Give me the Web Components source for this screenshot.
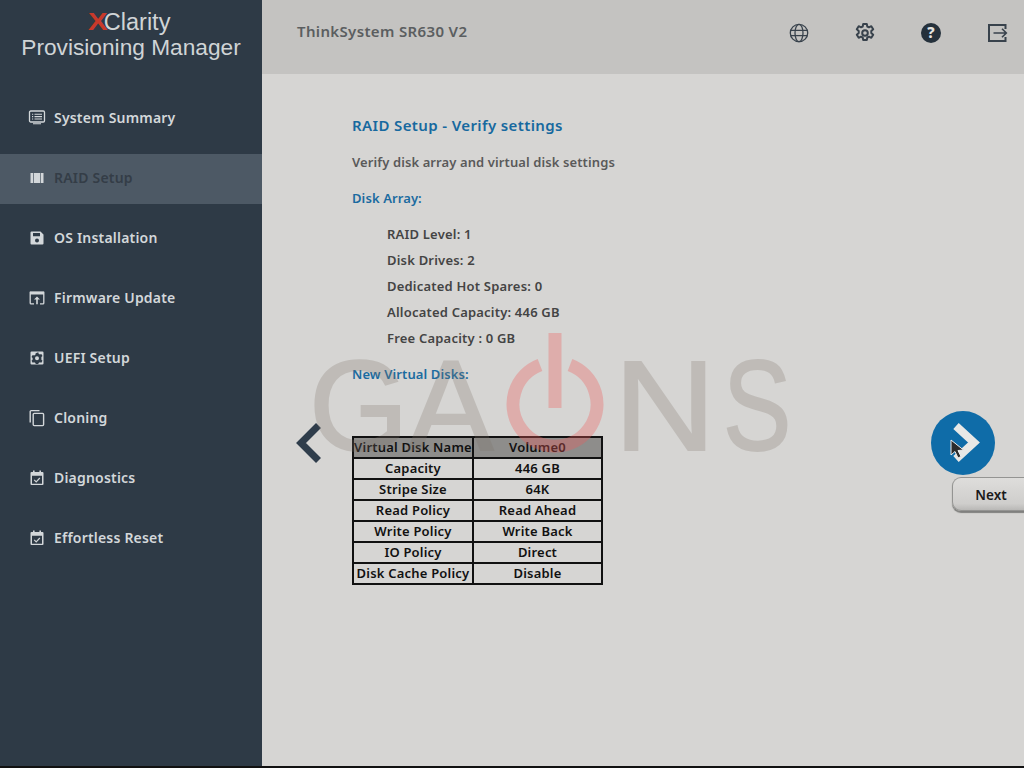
<!DOCTYPE html>
<html lang="en">
<head>
<meta charset="utf-8">
<title>XClarity Provisioning Manager</title>
<style>
  html, body { margin: 0; height: 100%; background: #d6d5d3; overflow: hidden; }
  body { font-family: "Noto Sans", sans-serif; }
</style>
</head>
<body>
<xcc-app>
  <side-bar slot="side">
    <nav-item icon="summary">System Summary</nav-item>
    <nav-item icon="raid" active>RAID Setup</nav-item>
    <nav-item icon="save">OS Installation</nav-item>
    <nav-item icon="update">Firmware Update</nav-item>
    <nav-item icon="chip">UEFI Setup</nav-item>
    <nav-item icon="copy">Cloning</nav-item>
    <nav-item icon="check">Diagnostics</nav-item>
    <nav-item icon="check">Effortless Reset</nav-item>
  </side-bar>
  <top-bar slot="top">ThinkSystem SR630 V2</top-bar>
  <verify-page slot="main"></verify-page>
</xcc-app>

<script>
const ICONS = {
  summary: `<rect x="1.5" y="2" width="15" height="11" rx="1.2" fill="none" stroke="currentColor" stroke-width="1.3"/><path d="M4 5.200h1.200M6.500 5.200H14M4 7.600h1.200M6.500 7.600H14M4 10h1.200M6.500 10H14M5 14.800h8" stroke="currentColor" stroke-width="1.100" fill="none"/>`,
  raid: `<path fill="currentColor" d="M2.500 4h2.800v10H2.500zM6 4h6v10H6zM12.700 4h2.800v10h-2.800z"/>`,
  save: `<path fill="currentColor" fill-rule="evenodd" d="M3.500 2.500h9l3 3v9a1 1 0 0 1-1 1h-11a1 1 0 0 1-1-1v-11a1 1 0 0 1 1-1zM5 4v3.200h7V4zM9 9.600a2 2 0 1 0 0 4 2 2 0 0 0 0-4z"/>`,
  update: `<path fill="none" stroke="currentColor" stroke-width="1.300" d="M6 14.900H3.100a.9.9 0 0 1-.9-.9V3.400h13.600V14a.9.9 0 0 1-.9.9H12"/><path fill="currentColor" d="M2 2.600h14v3H2zM9 7.600l3 3h-2.200v4.600H8.200v-4.600H6z"/>`,
  chip: `<path fill="currentColor" fill-rule="evenodd" d="M3.600 2.500h10.800a1.100 1.100 0 0 1 1.100 1.100v10.800a1.100 1.100 0 0 1-1.100 1.100H3.600a1.100 1.100 0 0 1-1.100-1.100V3.600a1.100 1.100 0 0 1 1.100-1.100zM7.700 4.300l-.3 1.400-1.300.8-1.400-.5-1.200 2.100 1.100 1v1.600l-1.100 1 1.200 2 1.400-.5 1.300.8.300 1h2.600l.3-1 1.300-.8 1.400.5 1.200-2-1.100-1V8.100l1.100-1-1.200-2.100-1.400.5-1.300-.8-.3-1.400zM9 7.200a2 2 0 1 1 0 4 2 2 0 0 1 0-4z"/>`,
  copy: `<path fill="none" stroke="currentColor" stroke-width="1.400" d="M2.200 13.500V2.600a1 1 0 0 1 1-1h8.300"/><rect x="5.200" y="4.400" width="10.400" height="12.200" rx="1" fill="none" stroke="currentColor" stroke-width="1.400"/>`,
  check: `<path fill="currentColor" fill-rule="evenodd" d="M5 1.500h1.600v1.400h4.800V1.500H13v1.400h1.500a1 1 0 0 1 1 1v11.200a1 1 0 0 1-1 1h-11a1 1 0 0 1-1-1V3.900a1 1 0 0 1 1-1H5zM4 6.800v8h10v-8z"/><path fill="none" stroke="currentColor" stroke-width="1.200" d="M6.200 10.800l2 2 3.600-3.800"/>`
};

class XccApp extends HTMLElement {
  constructor() {
    super();
    this.attachShadow({ mode: "open" });
    this.shadowRoot.innerHTML = `
    <style>
      :host {
        display: grid;
        grid-template-columns: 262px 1fr;
        grid-template-rows: 74px 1fr;
        width: 1024px;
        height: 766px;
        position: relative;
      }
      ::slotted([slot="side"]) { grid-row: 1 / 3; }
      .line {
        position: absolute;
        left: 0;
        right: 0;
        top: 766px;
        height: 2px;
        background: #111;
      }
    </style>
    <slot name="side"></slot>
    <slot name="top"></slot>
    <slot name="main"></slot>
    <div class="line"></div>`;
  }
}

class SideBar extends HTMLElement {
  constructor() {
    super();
    this.attachShadow({ mode: "open" });
    this.shadowRoot.innerHTML = `
    <style>
      :host {
        display: flex;
        flex-direction: column;
        background: #2e3a46;
      }
      .logo {
        height: 94px;
        box-sizing: border-box;
        padding-top: 9px;
        text-align: center;
        font-family: "Liberation Sans", sans-serif;
        color: #d0d4d6;
      }
      .brand { font-size: 23.5px; line-height: 26px; margin-left: -2px; }
      .brand b {
        display: inline-block;
        color: #c8392a;
        transform: scaleX(1.25);
        margin: 0 -1.5px 0 0;
      }
      .product { font-size: 22.7px; line-height: 25px; }
      nav { display: flex; flex-direction: column; gap: 10px; }
    </style>
    <div class="logo">
      <div class="brand"><b>X</b>Clarity</div>
      <div class="product">Provisioning Manager</div>
    </div>
    <nav><slot></slot></nav>`;
  }
}

class NavItem extends HTMLElement {
  constructor() {
    super();
    this.attachShadow({ mode: "open" });
  }

  connectedCallback() {
    const icon = ICONS[this.getAttribute("icon")] ?? "";
    this.shadowRoot.innerHTML = `
    <style>
      :host {
        display: flex;
        align-items: center;
        gap: 8px;
        height: 50px;
        padding-left: 28px;
        font-size: 14px;
        font-weight: 600;
        letter-spacing: .2px;
        color: #d3d7da;
      }
      :host([active]) { background: #4d5965; color: #343d47; }
      svg { width: 18px; height: 18px; color: #d3d7da; margin-bottom: 2px; }
      span { margin-bottom: 4px; }
    </style>
    <svg viewBox="0 0 18 18">${icon}</svg>
    <span><slot></slot></span>`;
  }
}

class TopBar extends HTMLElement {
  constructor() {
    super();
    this.attachShadow({ mode: "open" });
    this.shadowRoot.innerHTML = `
    <style>
      :host {
        display: flex;
        align-items: center;
        background: #c4c3c1;
        padding: 0 16px 0 35px;
        font-size: 15px;
        font-weight: 600;
        color: #5b5e60;
      }
      .title { flex: 1; margin-top: -12px; letter-spacing: .35px; }
      .icons { display: flex; gap: 42px; margin-top: -8px; color: #38424c; margin-right: -1px; }
      svg { width: 24px; height: 24px; display: block; }
    </style>
    <div class="title"><slot></slot></div>
    <div class="icons">
      <svg viewBox="0 0 24 24" fill="none" stroke="currentColor" stroke-width="1.300">
        <circle cx="12" cy="12" r="8.700"/><ellipse cx="12" cy="12" rx="4" ry="8.700"/><path d="M3.600 9.300h16.800M3.600 14.700h16.800"/>
      </svg>
      <svg viewBox="0 0 24 24" fill="none" stroke="currentColor" stroke-width="2">
        <path stroke-linejoin="round" d="M10.200 3h3.600l.5 2.500 1.700.8 2.300-1.100 1.900 3-1.900 1.700v2.200l1.900 1.700-1.900 3-2.300-1.100-1.700.8-.5 2.500h-3.600l-.5-2.500-1.700-.8-2.300 1.100-1.900-3 1.900-1.700V9.900L3.800 8.200l1.900-3L8 6.300l1.700-.8z"/><circle cx="12" cy="12" r="2.800"/>
      </svg>
      <svg viewBox="0 0 24 24">
        <circle cx="12" cy="12" r="10" fill="#25313c"/>
        <text x="12" y="17.300" text-anchor="middle" font-family="Noto Sans, sans-serif" font-size="15" font-weight="800" fill="#e4e4e2">?</text>
      </svg>
      <svg viewBox="0 0 24 24" fill="none" stroke="currentColor" stroke-width="2">
        <path d="M20.500 8V4H4v16h16.500v-4"/><path stroke-width="1.600" d="M8.500 12h13M17 7.800l4.300 4.200-4.300 4.200"/>
      </svg>
    </div>`;
  }
}

class VerifyPage extends HTMLElement {
  constructor() {
    super();
    this.attachShadow({ mode: "open" });
    this.shadowRoot.innerHTML = `
    <style>
      :host {
        display: block;
        position: relative;
        background: #d6d5d3;
        padding: 40px 0 0 90px;
        font-size: 13px;
        font-weight: 600;
        color: #444;
      }
      h1, p, h2 { margin: 0; }
      h1 { font-size: 15px; line-height: 22px; font-weight: 600; color: #17699f; letter-spacing: .38px; }
      .sub { margin-top: 16px; line-height: 20px; color: #5a5a5a; letter-spacing: .1px; }
      h2 { font-size: 13px; font-weight: 600; line-height: 20px; color: #1b6ba0; margin-top: 16px; letter-spacing: .1px; }
      ul { list-style: none; margin: 16px 0 13px 35px; padding: 0; display: flex; flex-direction: column; gap: 6px; letter-spacing: .2px; }
      li { line-height: 20px; }
      table {
        margin-top: 52px;
        border-collapse: collapse;
        table-layout: fixed;
        width: 251px;
        color: #111;
        text-align: center;
        font-size: 13px;
        letter-spacing: .2px;
      }
      td, th { border: 2px solid #111; height: 19px; padding: 0; font-weight: 600; line-height: 19px; white-space: nowrap; overflow: hidden; }
      th { background: #8e8d8b; }
      col.a { width: 120px; }
      .back {
        position: absolute;
        left: 32px;
        top: 347px;
        width: 30px;
        height: 44px;
      }
      .next-round {
        position: absolute;
        left: 669px;
        top: 337px;
        width: 64px;
        height: 64px;
      }
      .next-btn {
        position: absolute;
        left: 690px;
        top: 403px;
        width: 80px;
        height: 34px;
        box-sizing: border-box;
        border: 1px solid #949492;
        border-right: 0;
        border-radius: 9px 0 0 9px;
        background: linear-gradient(#dedddb, #cfcecc 80%, #b9b8b6);
        box-shadow: 0 2px 1px #80807e;
        color: #1a1a1a;
        font-size: 13.500px;
        font-weight: 600;
        display: flex;
        align-items: center;
        justify-content: center;
        padding: 2px 3px 0 0;
      }
      .mark {
        position: absolute;
        inset: 0;
        pointer-events: none;
      }
      .mark span {
        position: absolute;
        top: 268px;
        font-family: "Liberation Sans", sans-serif;
        font-weight: 400;
        font-size: 128px;
        line-height: 128px;
        color: #7d7268;
        -webkit-text-stroke: 2px #7d7268;
        opacity: .25;
        transform-origin: 0 50%;
      }
      .mark svg { position: absolute; left: 243px; top: 259px; width: 100px; height: 122px; }
      .cursor { position: absolute; left: 688px; top: 365px; width: 16px; height: 22px; }
    </style>
    <h1>RAID Setup - Verify settings</h1>
    <p class="sub">Verify disk array and virtual disk settings</p>
    <h2>Disk Array:</h2>
    <ul>
      <li>RAID Level: 1</li>
      <li>Disk Drives: 2</li>
      <li>Dedicated Hot Spares: 0</li>
      <li>Allocated Capacity: 446 GB</li>
      <li>Free Capacity : 0 GB</li>
    </ul>
    <h2>New Virtual Disks:</h2>
    <table>
      <colgroup><col class="a"><col></colgroup>
      <tr><th>Virtual Disk Name</th><th>Volume0</th></tr>
      <tr><td>Capacity</td><td>446 GB</td></tr>
      <tr><td>Stripe Size</td><td>64K</td></tr>
      <tr><td>Read Policy</td><td>Read Ahead</td></tr>
      <tr><td>Write Policy</td><td>Write Back</td></tr>
      <tr><td>IO Policy</td><td>Direct</td></tr>
      <tr><td>Disk Cache Policy</td><td>Disable</td></tr>
    </table>
    <svg class="back" viewBox="0 0 30 44" fill="none" stroke="#2f3d4b" stroke-width="7"><path d="M24.500 4.500L7 22l17.500 17.500"/></svg>
    <svg class="next-round" viewBox="0 0 64 64">
      <circle cx="32" cy="32" r="32" fill="#0f6ca8"/>
      <path d="M25 15l18 16.500L25 48" fill="none" stroke="#e8e8e6" stroke-width="8"/>
    </svg>
    <svg class="cursor" viewBox="0 0 16 22"><path d="M1 1v15l4-3.500 3 6.500 3-1.500-3-6 5.500-.5z" fill="#2b2b2b" stroke="#eee" stroke-width="1"/></svg>
    <div class="next-btn">Next</div>
    <div class="mark">
      <span style="left:47px">G</span>
      <span style="left:146px">A</span>
      <span style="left:352px;transform:scaleX(1.1)">N</span>
      <span style="left:461px;transform:scaleX(.8)">S</span>
      <svg viewBox="0 0 100 122" fill="none" stroke="rgba(240,90,90,.33)" stroke-width="13">
        <path d="M35 32A42 42 0 1 0 65 32"/><path d="M50 0v75"/>
      </svg>
    </div>`;
  }
}

customElements.define("xcc-app", XccApp);
customElements.define("side-bar", SideBar);
customElements.define("nav-item", NavItem);
customElements.define("top-bar", TopBar);
customElements.define("verify-page", VerifyPage);
</script>
</body>
</html>
